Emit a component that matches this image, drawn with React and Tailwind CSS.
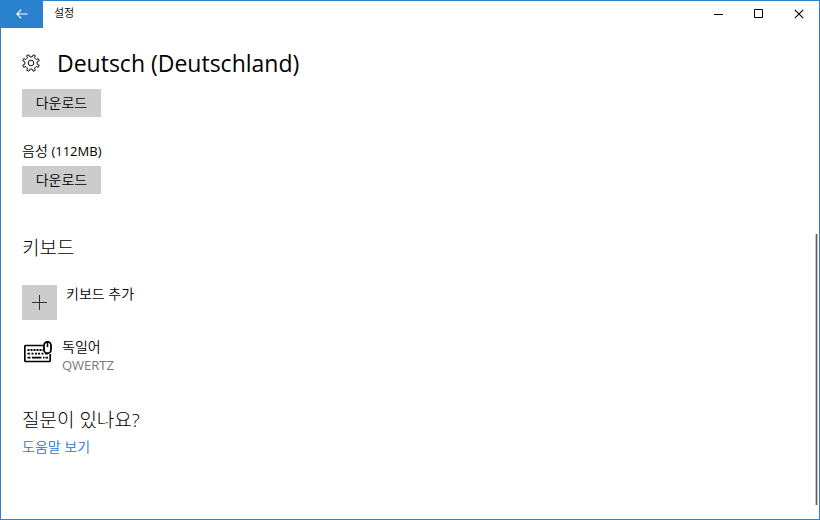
import React from 'react';

const UI = "font-['Open_Sans','Noto_Sans_CJK_KR',sans-serif]";

// Outline of the eight-toothed settings gear, centred on 0,0.
function gearOutline() {
  const points = [];
  for (let tooth = 0; tooth < 8; tooth += 1) {
    const base = tooth * 45 + 22.5;
    const corners = [
      [-12, 6.2],
      [-8, 8.5],
      [8, 8.5],
      [12, 6.2],
    ];
    corners.forEach(([offset, radius]) => {
      const angle = ((base + offset) * Math.PI) / 180;
      points.push(`${(radius * Math.cos(angle)).toFixed(2)} ${(radius * Math.sin(angle)).toFixed(2)}`);
    });
  }
  return `M${points.join('L')}Z`;
}

const GEAR = gearOutline();

function GearIcon() {
  return (
    <svg className="size-[18px] shrink-0" viewBox="-9 -9 18 18" fill="none" stroke="#111" strokeWidth="1" strokeLinejoin="round" aria-hidden="true">
      <path d={GEAR} />
      <circle r="2.8" />
    </svg>
  );
}

function KeyboardIcon() {
  return (
    <svg className="mt-[3px] h-[22px] w-7 shrink-0" viewBox="0 0 28 22" fill="none" stroke="#000" aria-hidden="true">
      <path d="M19 4.5H1.8a1 1 0 0 0-1 1v14a1 1 0 0 0 1 1h23.4a1 1 0 0 0 1-1V13" strokeWidth="1.7" />
      <path d="M3.5 9H20" strokeWidth="1.8" strokeDasharray="2 1" />
      <path d="M3.5 12.7h2.5M7.5 12.7h2M11 12.7h2M14 12.7h2M17.5 12.7h2M21 12.7h3" strokeWidth="1.8" />
      <path d="M3.5 16.7h3M8 16.7h9.5M19 16.7h1.5M21.5 16.7h2.5" strokeWidth="1.8" />
      <path d="M20 4.3a3.5 3.5 0 0 1 7 0v4.4a3.5 3.5 0 0 1-7 0z" strokeWidth="1.8" fill="#fff" />
      <path d="M23.5 1v5" strokeWidth="1.5" />
    </svg>
  );
}

function CaptionButton({ label, children }) {
  return (
    <button type="button" aria-label={label} className="flex w-10 items-center justify-center pb-px hover:bg-gray-200">
      <svg className="size-[10px]" viewBox="0 0 10 10" fill="none" stroke="#000" aria-hidden="true">
        {children}
      </svg>
    </button>
  );
}

function TitleBar() {
  return (
    <header className="flex h-[27px] shrink-0">
      <button type="button" aria-label="뒤로" className="flex w-[42px] items-center justify-center bg-[#2a82ce] pb-px">
        <svg className="h-[10px] w-3" viewBox="0 0 12 10" fill="none" stroke="#fff" strokeWidth="1.2" aria-hidden="true">
          <path d="M11.5 5H1M5.2 .7.9 5l4.3 4.3" />
        </svg>
      </button>
      <span className="ml-[11px] pt-1 text-[11px] leading-4">설정</span>
      <div className="ml-auto flex">
        <CaptionButton label="최소화">
          <path d="M0 5.5h9" />
        </CaptionButton>
        <CaptionButton label="최대화">
          <path d="M.5 .5h8v8h-8z" />
        </CaptionButton>
        <CaptionButton label="닫기">
          <path d="M.8 .8l8.400 8.400M9.200 .8.8 9.200" strokeWidth="1.1" />
        </CaptionButton>
      </div>
    </header>
  );
}

function DownloadButton() {
  return (
    <button type="button" className="block h-7 min-w-[79px] bg-[#ccc] px-3 text-sm leading-5">
      다운로드
    </button>
  );
}

export default function App() {
  return (
    <div className={`relative flex min-h-dvh flex-col border border-[#2a82ce] bg-white font-[350] text-black ${UI}`}>
      <TitleBar />
      <main className="px-[21px] pt-[19px] pb-5">
        <div className="flex h-8 items-center gap-[17px]">
          <GearIcon />
          <h1 className="text-[23px] font-normal">Deutsch (Deutschland)</h1>
        </div>
        <section className="pt-[10px]">
          <DownloadButton />
          <p className="mt-6 mb-[5px] text-sm leading-5">
            음성 <span className="text-[13px] font-normal">(112MB)</span>
          </p>
          <DownloadButton />
        </section>
        <section className="pt-10">
          <h2 className="text-[19px] leading-7 font-light">키보드</h2>
          <button type="button" className="mt-[23px] flex items-start gap-[9px] text-sm leading-[18px]">
            <span className="flex size-[35px] items-center justify-center bg-[#ccc]">
              <svg className="size-[15px]" viewBox="0 0 15 15" fill="none" stroke="#333" aria-hidden="true">
                <path d="M7.5 0v15M0 7.5h15" />
              </svg>
            </span>
            키보드 추가
          </button>
          <div className="mt-[18px] flex items-start gap-[10px] pl-[2px]">
            <KeyboardIcon />
            <div className="text-sm leading-[18px]">
              <p>독일어</p>
              <p className="text-[13px] leading-[18px] font-normal text-[#777]">QWERTZ</p>
            </div>
          </div>
        </section>
        <section className="pt-8">
          <h2 className="text-[19px] leading-7 font-light">질문이 있나요?</h2>
          <a href="#help" className="block w-fit text-sm leading-[26px] text-[#1a7ad0]">
            도움말 보기
          </a>
        </section>
      </main>
      <div className="absolute top-[45%] right-[1px] bottom-[14px] w-[3px] border-x border-[#c8c8c8] bg-[#5a5f63]" />
    </div>
  );
}
